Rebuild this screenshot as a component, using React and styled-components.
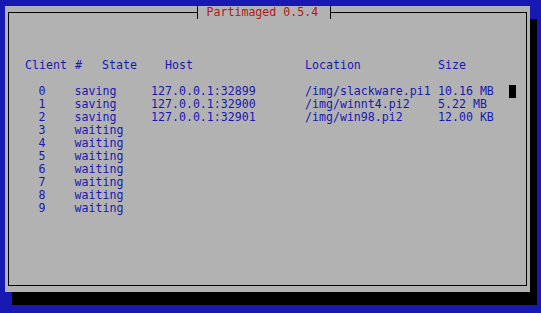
import styled, { createGlobalStyle } from "styled-components";

const GlobalStyle = createGlobalStyle`
  html, body {
    margin: 0;
    padding: 0;
    background: #1818b2;
  }
  body {
    width: 541px;
    height: 313px;
    overflow: hidden;
    font-family: "DejaVu Sans Mono", "Liberation Mono", monospace;
    font-size: 11.6px;
  }
`;

const Screen = styled.div`
  box-sizing: border-box;
  height: 313px;
  padding: 6px 0 0 5px;
`;

const Window = styled.div`
  box-sizing: border-box;
  width: 525px;
  height: 286px;
  padding: 0 3px 6px;
  display: flex;
  flex-direction: column;
  background: #b2b2b2;
  box-shadow: 7px 13px 0 #000;
`;

const Frame = styled.fieldset`
  flex: 1;
  margin: 0;
  padding: 0;
  min-width: 0;
  border: 1px solid #000;
`;

const Title = styled.legend`
  margin-left: 188px;
  padding: 0 11.5px 0 8.5px;
  height: 13px;
  line-height: 13px;
  border-left: 1px solid #000;
  border-right: 1px solid #000;
  color: #b21818;
  white-space: pre;
`;

const Table = styled.div`
  padding-top: 39.5px;
  line-height: 13.07px;
  color: #1818b2;
`;

const Row = styled.div`
  display: grid;
  grid-template-columns: ${(p) => p.$cols};
  padding-left: 16px;
  margin-bottom: ${(p) => (p.$head ? "13.07px" : "0")};
  white-space: pre;
`;

const Num = styled.span`
  padding-left: 13.5px;
`;

const Cursor = styled.span`
  display: block;
  height: 13px;
  background: #000;
`;

const HEAD_COLS = "50px 27px 63px 140px 133px auto";
const ROW_COLS = "49.5px 76.5px 154px 133px 71px 7px";

const clients = [
  { state: "saving", host: "127.0.0.1:32899", location: "/img/slackware.pi1", size: "10.16 MB" },
  { state: "saving", host: "127.0.0.1:32900", location: "/img/winnt4.pi2", size: "5.22 MB" },
  { state: "saving", host: "127.0.0.1:32901", location: "/img/win98.pi2", size: "12.00 KB" },
  { state: "waiting" },
  { state: "waiting" },
  { state: "waiting" },
  { state: "waiting" },
  { state: "waiting" },
  { state: "waiting" },
  { state: "waiting" },
];

export default function App() {
  return (
    <>
      <GlobalStyle />
      <Screen>
        <Window>
          <Frame>
            <Title>Partimaged 0.5.4</Title>
            <Table>
              <Row $cols={HEAD_COLS} $head>
                <span>Client</span>
                <span>#</span>
                <span>State</span>
                <span>Host</span>
                <span>Location</span>
                <span>Size</span>
              </Row>
              {clients.map((c, i) => (
                <Row key={i} $cols={ROW_COLS}>
                  <Num>{i}</Num>
                  <span>{c.state}</span>
                  <span>{c.host || ""}</span>
                  <span>{c.location || ""}</span>
                  <span>{c.size || ""}</span>
                  {i === 0 ? <Cursor /> : <span />}
                </Row>
              ))}
            </Table>
          </Frame>
        </Window>
      </Screen>
    </>
  );
}
